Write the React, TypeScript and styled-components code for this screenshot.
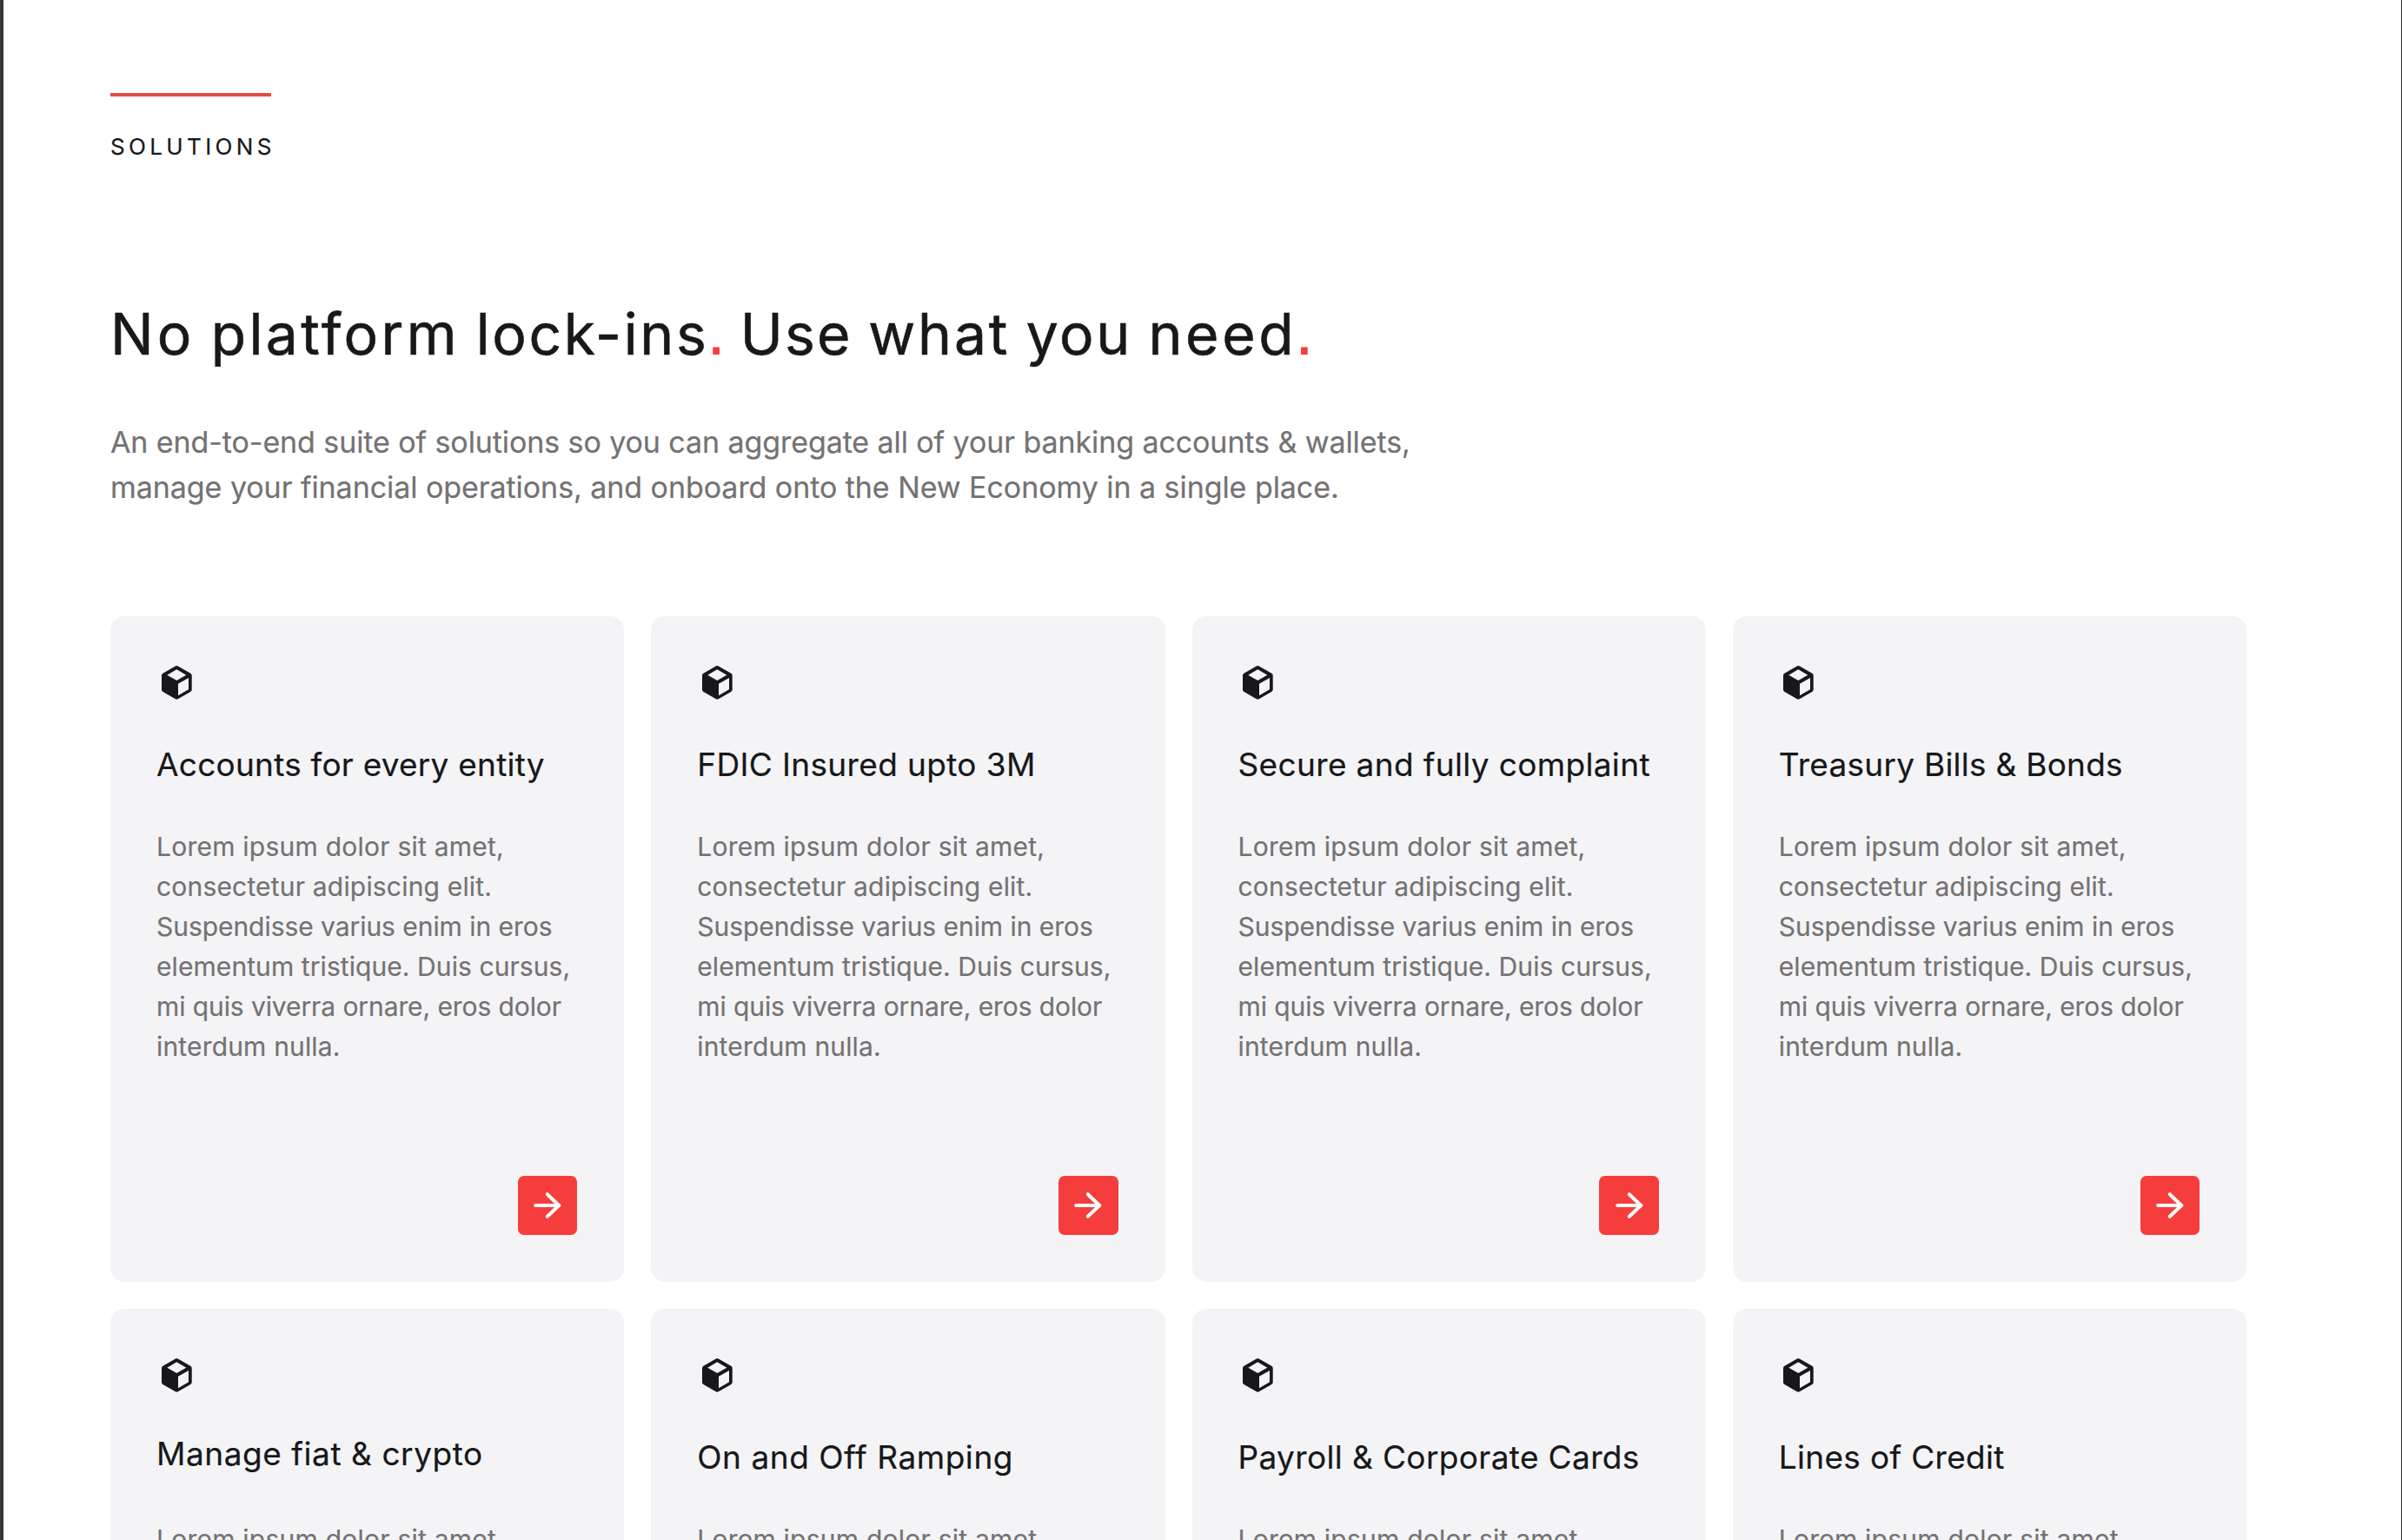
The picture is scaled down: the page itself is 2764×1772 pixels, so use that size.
import React from 'react'
import styled, { createGlobalStyle } from 'styled-components'

interface Solution {
  title: string
  spacing: number
  raised?: boolean
}

const solutions: Solution[] = [
  { title: 'Accounts for every entity', spacing: 0.24 },
  { title: 'FDIC Insured upto 3M', spacing: 0.36 },
  { title: 'Secure and fully complaint', spacing: 0.35 },
  { title: 'Treasury Bills & Bonds', spacing: 0.25 },
  { title: 'Manage fiat & crypto', spacing: 0.55, raised: true },
  { title: 'On and Off Ramping', spacing: 0.55 },
  { title: 'Payroll & Corporate Cards', spacing: 0.37 },
  { title: 'Lines of Credit', spacing: 0.32 },
]

const headline = [
  { text: 'No', spacing: 3.9 },
  { text: 'platform', spacing: 3.4 },
  { text: 'lock-ins', spacing: 2.65, dot: true },
  { text: 'Use', spacing: 2.15 },
  { text: 'what', spacing: 2.8 },
  { text: 'you', spacing: 2.6 },
  { text: 'need', spacing: 3.6, dot: true },
]

const intro = [
  { text: 'An end-to-end suite of solutions so you can aggregate all of your banking accounts & wallets,', spacing: -0.091 },
  { text: 'manage your financial operations, and onboard onto the New Economy in a single place.', spacing: -0.059 },
]

const copy = [
  { text: 'Lorem ipsum dolor sit amet,', spacing: 0.231 },
  { text: 'consectetur adipiscing elit.', spacing: 0.183 },
  { text: 'Suspendisse varius enim in eros', spacing: -0.05 },
  { text: 'elementum tristique. Duis cursus,', spacing: 0.079 },
  { text: 'mi quis viverra ornare, eros dolor', spacing: -0.09 },
  { text: 'interdum nulla.', spacing: 0.167 },
]

const CubeIcon: React.FC = () => (
  <StyledCube viewBox="0 0 46 46">
    <path
      d="M22.3 7 36.7 15.3V31.4L22.3 39.7 8 31.4V15.3Z"
      fill="#17181a"
      stroke="#17181a"
      strokeWidth="6"
      strokeLinejoin="round"
    />
    <path d="M22.3 8.3 33.3 14.7 22.3 21 11.3 14.7Z" fill="#f4f4f7" />
    <path d="M24 24.7 36 18V31.3L24 38.3Z" fill="#f4f4f7" />
  </StyledCube>
)

const ArrowIcon: React.FC = () => (
  <StyledArrow viewBox="0 0 40 40">
    <path d="M6.2 20H33.5M19.8 7.2 33.2 20 19.8 32.8" />
  </StyledArrow>
)

const App: React.FC = () => {
  return (
    <Page>
      <GlobalStyle />
      <Accent />
      <Eyebrow>SOLUTIONS</Eyebrow>
      <Heading>
        {headline.map((word) => (
          <React.Fragment key={word.text}>
            <Word $spacing={word.spacing}>{word.text}</Word>
            {word.dot && <Dot>.</Dot>}{' '}
          </React.Fragment>
        ))}
      </Heading>
      <Intro>
        {intro.map((line) => (
          <Line key={line.text} $spacing={line.spacing}>{line.text}</Line>
        ))}
      </Intro>
      <Grid>
        {solutions.map((item) => (
          <Card key={item.title}>
            <CubeIcon />
            <CardTitle $spacing={item.spacing} $raised={item.raised}>{item.title}</CardTitle>
            <CardText>
              {copy.map((line) => (
                <Line key={line.text} $spacing={line.spacing}>{line.text}</Line>
              ))}
            </CardText>
            <CardButton aria-label={item.title}>
              <ArrowIcon />
            </CardButton>
          </Card>
        ))}
      </Grid>
    </Page>
  )
}

const GlobalStyle = createGlobalStyle`
  * {
    box-sizing: border-box;
  }
  body {
    margin: 0;
    background: #fff;
    overflow: hidden;
  }
`

const Page = styled.main`
  width: 2764px;
  height: 1772px;
  overflow: hidden;
  padding: 107px 178px 0 123px;
  border-left: 4px solid #383532;
  border-right: 1px solid #2b2b2d;
  background: #fff;
  color: #17181a;
  font-family: Inter, 'Liberation Sans', sans-serif;
`

const Accent = styled.div`
  width: 185px;
  height: 4px;
  background: #e44b46;
`

const Eyebrow = styled.div`
  margin-top: 40px;
  font-size: 26px;
  line-height: 35px;
  letter-spacing: 4.35px;
  -webkit-text-stroke: 0.2px currentColor;
`

const Heading = styled.h2`
  margin: 158px 0 0;
  font-size: 66px;
  font-weight: 400;
  line-height: 80px;
  white-space: nowrap;
`

const Word = styled.span<{ $spacing: number }>`
  letter-spacing: ${(props) => props.$spacing}px;
  -webkit-text-stroke: 0.6px currentColor;
`

// square full stop, a touch larger than the headline
const Dot = styled.span`
  margin: 0 -2px 0 -2.5px;
  color: #f53d3c;
  font-family: 'Liberation Sans', sans-serif;
  font-size: 80px;
  line-height: 0;
`

const Line = styled.span<{ $spacing: number }>`
  display: block;
  letter-spacing: ${(props) => props.$spacing}px;
  white-space: nowrap;
`

const Intro = styled.p`
  margin: 59px 0 0;
  color: #747272;
  font-size: 34px;
  line-height: 52px;
  -webkit-text-stroke: 0.2px currentColor;
`

const Grid = styled.div`
  display: grid;
  grid-template-columns: repeat(4, 1fr);
  grid-auto-rows: 766px;
  gap: 31px;
  margin-top: 122px;
`

const Card = styled.article`
  display: flex;
  flex-direction: column;
  padding: 53px 54px 54px 53px;
  border-radius: 16px;
  background: #f4f4f7;
`

const StyledCube = styled.svg`
  width: 46px;
  height: 46px;
  margin-left: 0.5px;
  flex: none;
`

const CardTitle = styled.h3<{ $spacing: number; $raised?: boolean }>`
  margin: ${(props) => (props.$raised ? '44px 0 51px' : '48px 0 47px')};
  font-size: 37px;
  font-weight: 400;
  line-height: 48px;
  letter-spacing: ${(props) => props.$spacing}px;
  white-space: nowrap;
  -webkit-text-stroke: 0.2px currentColor;
`

const CardText = styled.p`
  margin: 0;
  color: #747272;
  font-size: 30px;
  line-height: 46px;
  -webkit-text-stroke: 0.2px currentColor;
`

const CardButton = styled.button`
  display: flex;
  align-items: center;
  justify-content: center;
  align-self: flex-end;
  width: 68.5px;
  height: 68.5px;
  margin-top: auto;
  padding: 0;
  border: 0;
  border-radius: 7px;
  background: #f53d3c;
`

const StyledArrow = styled.svg`
  width: 40px;
  height: 40px;
  fill: none;
  stroke: #fff;
  stroke-width: 4;
  stroke-linecap: round;
  stroke-linejoin: round;
`

export default App
